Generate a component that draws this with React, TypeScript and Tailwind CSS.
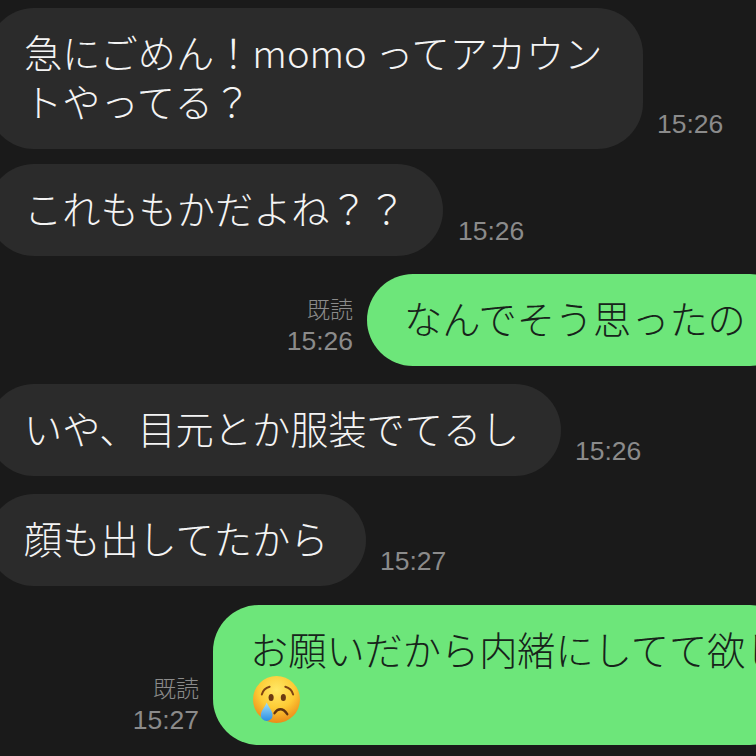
const incoming = 'rounded-[46px] pt-[19px] pb-[24px] pl-[36px] pr-[30px] bg-[#2b2b2b] text-[#f4f4f4] shrink-0'
const outgoing = 'rounded-[46px] pt-[19px] pb-[24px] pl-[37px] bg-[#6de67a] text-[#17231a] shrink-0 mr-[-40px] whitespace-nowrap'

function CryingFace() {
  return (
    <svg viewBox="0 0 48 48" className="block w-[47px] h-[47px] ml-[3px] mt-[3px] mb-[-2px]">
      <defs>
        <radialGradient id="face" cx="50%" cy="30%" r="70%">
          <stop offset="0%" stopColor="#ffe866" />
          <stop offset="55%" stopColor="#fdcb35" />
          <stop offset="100%" stopColor="#ec8a18" />
        </radialGradient>
        <linearGradient id="tear" x1="0" y1="0" x2="0" y2="1">
          <stop offset="0%" stopColor="#a5e0f8" />
          <stop offset="100%" stopColor="#2a8fe4" />
        </linearGradient>
      </defs>
      <circle cx="24" cy="24" r="24" fill="url(#face)" />
      <path d="M9 19c1-4 4-7 8-8" fill="none" stroke="#7d4212" strokeWidth="2" strokeLinecap="round" />
      <path d="M41 19c-1-4-4-7-8-8" fill="none" stroke="#7d4212" strokeWidth="2" strokeLinecap="round" />
      <ellipse cx="18.500" cy="22" rx="2.600" ry="3.600" fill="#6b3a12" />
      <ellipse cx="31" cy="22" rx="2.600" ry="3.600" fill="#6b3a12" />
      <path d="M22 38c2-3 4-4 6-4c3 0 5 2 7 5" fill="none" stroke="#5f3210" strokeWidth="2.400" strokeLinecap="round" />
      <path d="M14 27c-2 5-6 8.500-6 13a6 6 0 0 0 12 0c0-4.500-4-8-6-13z" fill="url(#tear)" />
    </svg>
  )
}

function Time({ label, read }: { label: string; read?: boolean }) {
  return (
    <div className="flex flex-col items-end pb-[9px] shrink-0 text-[#8b8b8b] font-['Liberation_Sans','Noto_Sans_CJK_JP',sans-serif]">
      {read && <span className="text-[23px] leading-[31px]">既読</span>}
      <span className="text-[26.500px] leading-[31px]">{label}</span>
    </div>
  )
}

export default function App() {
  return (
    <div className="w-[756px] h-[756px] overflow-hidden bg-[#1a1a1a] pt-2 flex flex-col text-[38.200px] font-light leading-[49px] font-['Noto_Sans_CJK_JP',sans-serif]">
      <div className="flex items-end gap-[14px] ml-[-12px]">
        <div className={`${incoming} w-[655px]`}>急にごめん！momo ってアカウントやってる？</div>
        <Time label="15:26" />
      </div>

      <div className="flex items-end gap-[15px] ml-[-12px] mt-[15px]">
        <div className={`${incoming} w-[455px]`}>これももかだよね？？</div>
        <Time label="15:26" />
      </div>

      <div className="flex items-end justify-end gap-[14px] mt-[18px]">
        <Time label="15:26" read />
        <div className={`${outgoing} w-[429px]`}>なんでそう思ったの</div>
      </div>

      <div className="flex items-end gap-[14px] ml-[-12px] mt-[18px]">
        <div className={`${incoming} w-[573px]`}>いや、目元とか服装でてるし</div>
        <Time label="15:26" />
      </div>

      <div className="flex items-end gap-[14px] ml-[-12px] mt-[18px]">
        <div className={`${incoming} w-[378px]`}>顔も出してたから</div>
        <Time label="15:27" />
      </div>

      <div className="flex items-end justify-end gap-[14px] mt-[19px]">
        <Time label="15:27" read />
        <div className={`${outgoing} w-[583px]`}>
          <div>お願いだから内緒にしてて欲しい</div>
          <CryingFace />
        </div>
      </div>
    </div>
  )
}
